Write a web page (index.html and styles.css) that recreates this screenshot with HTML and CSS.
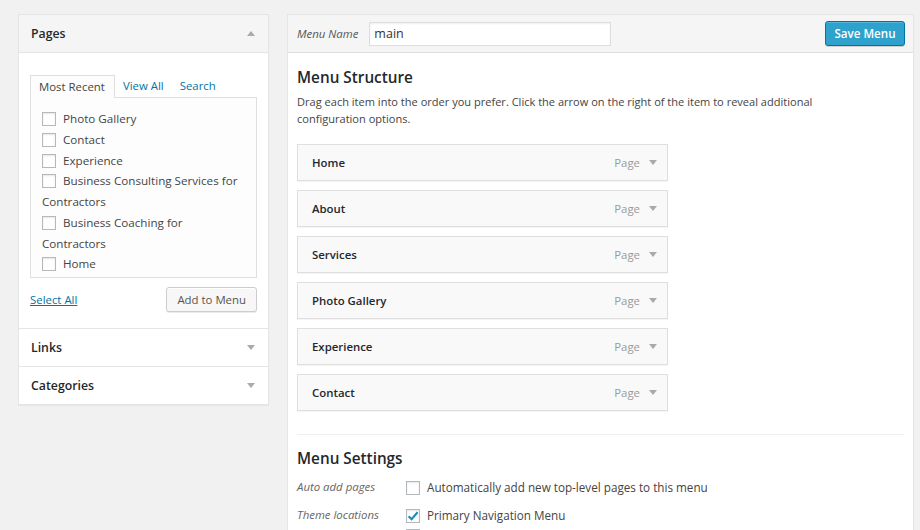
FILE: index.html
```html
<!DOCTYPE html>
<html lang="en">
<head>
<meta charset="utf-8">
<title>Menus</title>
<link rel="stylesheet" href="styles.css">
</head>
<body>
<div class="page">
  <aside class="side">
    <section class="box">
      <div class="box-head open"><h3>Pages</h3><span class="arrow up"></span></div>
      <div class="box-body">
        <div class="tabs">
          <span class="tab active">Most Recent</span>
          <a class="tab" href="#">View All</a>
          <a class="tab" href="#">Search</a>
        </div>
        <div class="tabs-panel">
          <ul class="checklist">
            <li><span class="cb"></span>Photo Gallery</li>
            <li><span class="cb"></span>Contact</li>
            <li><span class="cb"></span>Experience</li>
            <li><span class="cb"></span>Business Consulting Services for Contractors</li>
            <li><span class="cb"></span>Business Coaching for Contractors</li>
            <li><span class="cb"></span>Home</li>
          </ul>
        </div>
        <div class="actions">
          <a class="select-all" href="#">Select All</a>
          <button class="btn">Add to Menu</button>
        </div>
      </div>
      <div class="box-head"><h3>Links</h3><span class="arrow down"></span></div>
      <div class="box-head"><h3>Categories</h3><span class="arrow down"></span></div>
    </section>
  </aside>

  <main class="editor">
    <div class="editor-head">
      <span class="name-label">Menu Name</span>
      <input class="name-input" type="text" value="main">
      <button class="btn-primary">Save Menu</button>
    </div>
    <div class="editor-body">
      <h2 class="section-title">Menu Structure</h2>
      <p class="instructions">Drag each item into the order you prefer. Click the arrow on the right of the item to reveal additional configuration options.</p>
      <ul class="menu-items">
        <li class="item"><span class="item-title">Home</span><span class="item-type">Page</span><span class="arrow down"></span></li>
        <li class="item"><span class="item-title">About</span><span class="item-type">Page</span><span class="arrow down"></span></li>
        <li class="item"><span class="item-title">Services</span><span class="item-type">Page</span><span class="arrow down"></span></li>
        <li class="item"><span class="item-title">Photo Gallery</span><span class="item-type">Page</span><span class="arrow down"></span></li>
        <li class="item"><span class="item-title">Experience</span><span class="item-type">Page</span><span class="arrow down"></span></li>
        <li class="item"><span class="item-title">Contact</span><span class="item-type">Page</span><span class="arrow down"></span></li>
      </ul>
      <div class="settings">
        <h2 class="section-title">Menu Settings</h2>
        <div class="settings-grid">
          <span class="setting-label">Auto add pages</span>
          <div class="setting-opts">
            <div class="opt"><span class="cb"></span>Automatically add new top-level pages to this menu</div>
          </div>
          <span class="setting-label">Theme locations</span>
          <div class="setting-opts">
            <div class="opt"><span class="cb checked"><svg viewBox="0 0 14 14" width="14" height="14"><path d="M2.6 7.2 L5.6 10.2 L11.6 3.2" fill="none" stroke="#1e8cbe" stroke-width="2.2"/></svg></span>Primary Navigation Menu</div>
            <div class="opt"><span class="cb"></span>Secondary Menu</div>
          </div>
        </div>
      </div>
    </div>
  </main>
</div>
</body>
</html>
```
FILE: styles.css
```css
* { box-sizing: border-box; }

body {
  margin: 0;
  background: #f1f1f1;
  font-family: "Open Sans", "DejaVu Sans", sans-serif;
  font-size: 11.4px;
  color: #444;
}

.page {
  display: flex;
  align-items: flex-start;
  gap: 18px;
  padding: 14px 6px 0 18px;
}

/* ---------- left column ---------- */
.side { width: 251px; flex: none; }

.box {
  background: #fff;
  border: 1px solid #e5e5e5;
  box-shadow: 0 1px 1px rgba(0,0,0,.04);
}

.box-head {
  height: 38px;
  display: flex;
  align-items: center;
  justify-content: space-between;
  padding: 0 13px 0 12px;
  border-top: 1px solid #e5e5e5;
}
.box-head.open {
  border-top: none;
  background: #f5f5f5;
  border-bottom: 1px solid #e5e5e5;
}
.box-head h3 {
  margin: 0;
  font-size: 12.3px;
  font-weight: 600;
  color: #23282d;
}

.arrow {
  width: 0;
  height: 0;
  border-left: 4px solid transparent;
  border-right: 4px solid transparent;
}
.arrow.down { border-top: 5px solid #aaa; }
.arrow.up { border-bottom: 5px solid #aaa; }

.box-body { padding: 21px 11px 16px 11px; }

.tabs { display: flex; align-items: flex-end; }
.tab {
  height: 23px;
  line-height: 22px;
  padding: 0 8px;
  border-top: 1px solid transparent;
  color: #0074a2;
  text-decoration: none;
}
.tab.active {
  position: relative;
  z-index: 1;
  margin-bottom: -1px;
  padding: 0 9px 0 8px;
  border: 1px solid #dfdfdf;
  border-bottom: none;
  background: #fdfdfd;
  color: #444;
}

.tabs-panel {
  border: 1px solid #dfdfdf;
  background: #fdfdfd;
  padding: 11px 10px 2px 11px;
}

.checklist { list-style: none; margin: 0; padding: 0; }
.checklist li { line-height: 20.75px; font-size: 11.65px; }

.cb {
  display: inline-block;
  width: 14px;
  height: 14px;
  margin: 0 7px 0 0;
  vertical-align: -3px;
  border: 1px solid #b4b9be;
  background: #fff;
  box-shadow: inset 0 1px 2px rgba(0,0,0,.1);
}
.cb svg { display: block; margin: -1px 0 0 -1px; }

.actions {
  display: flex;
  align-items: center;
  justify-content: space-between;
  margin-top: 9px;
}
.select-all { color: #0074a2; text-decoration: underline; }

.btn {
  height: 25px;
  padding: 0 10px;
  border: 1px solid #ccc;
  border-radius: 3px;
  background: #f7f7f7;
  box-shadow: inset 0 1px 0 #fff, 0 1px 0 rgba(0,0,0,.08);
  color: #555;
  font-family: inherit;
  font-size: 11.4px;
}

/* ---------- editor ---------- */
.editor {
  flex: 1;
  min-height: 560px;
  background: #fff;
  border: 1px solid #e5e5e5;
  box-shadow: 0 1px 1px rgba(0,0,0,.04);
}

.editor-head {
  height: 38px;
  display: flex;
  align-items: center;
  padding: 0 8px 0 9px;
  background: #f5f5f5;
  border-bottom: 1px solid #dfdfdf;
}
.name-label {
  font-style: italic;
  color: #555;
  margin-right: 11px;
}
.name-input {
  width: 242px;
  height: 24px;
  padding: 0 4px;
  border: 1px solid #ddd;
  box-shadow: inset 0 1px 2px rgba(0,0,0,.07);
  font-family: inherit;
  font-size: 12.5px;
  color: #333;
  outline: none;
}
.btn-primary {
  margin-left: auto;
  height: 25px;
  width: 80px;
  padding: 0;
  border: 1px solid #0074a2;
  border-radius: 3px;
  background: #2ea2cc;
  box-shadow: inset 0 1px 0 rgba(120,200,230,.5), 0 1px 0 rgba(0,0,0,.15);
  color: #fff;
  font-family: inherit;
  font-size: 11.6px;
  font-weight: 600;
}

.editor-body { padding: 0 9px; }

.section-title {
  margin: 14px 0 0;
  font-size: 15.3px;
  line-height: 20px;
  font-weight: 600;
  color: #23282d;
}

.instructions {
  margin: 6px 0 0;
  max-width: 540px;
  font-size: 11.05px;
  line-height: 17px;
}

.menu-items {
  list-style: none;
  margin: 17px 0 0;
  padding: 0;
  display: flex;
  flex-direction: column;
  gap: 9px;
}
.item {
  width: 371px;
  height: 37px;
  display: flex;
  align-items: center;
  padding: 0 10px 0 14px;
  border: 1px solid #dfdfdf;
  background: #f9f9f9;
  box-shadow: 0 1px 1px rgba(0,0,0,.04);
}
.item-title { font-weight: 600; color: #23282d; }
.item-type { margin-left: auto; margin-right: 9px; color: #999; }

.settings {
  margin-top: 23px;
  border-top: 1px solid #eee;
}
.settings .section-title { margin-top: 13px; }

.settings-grid {
  display: grid;
  grid-template-columns: 109px 1fr;
  row-gap: 8px;
  margin-top: 9px;
  line-height: 20px;
}
.setting-label { font-style: italic; color: #666; }
.opt { line-height: 20px; font-size: 11.7px; }
```
